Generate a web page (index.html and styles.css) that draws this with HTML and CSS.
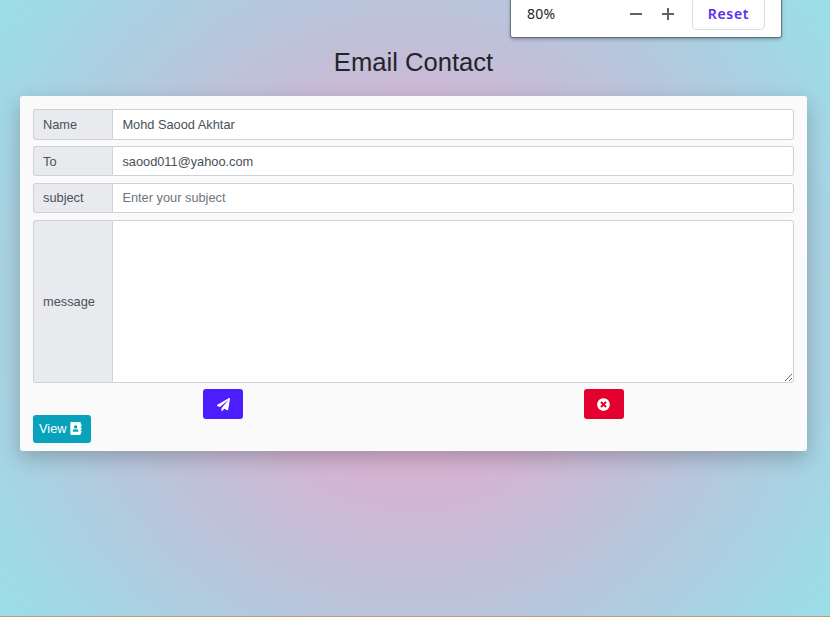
FILE: index.html
```html
<!DOCTYPE html>
<html lang="en">
<head>
<meta charset="utf-8">
<title>Email Contact</title>
<link rel="stylesheet" href="styles.css">
</head>
<body>
<div class="zoom-bubble">
  <span class="zoom-value">80%</span>
  <svg class="zoom-icon" width="14" height="14" viewBox="0 0 14 14"><path d="M1 7h12" stroke="#5f6368" stroke-width="2"/></svg>
  <svg class="zoom-icon" width="14" height="14" viewBox="0 0 14 14"><path d="M1 7h12M7 1v12" stroke="#5f6368" stroke-width="2"/></svg>
  <button class="zoom-reset">Reset</button>
</div>
<main class="container">
  <h2 class="title">Email Contact</h2>
  <form class="card">
    <div class="group"><label class="label" for="name">Name</label><input class="field" id="name" value="Mohd Saood Akhtar"></div>
    <div class="group"><label class="label" for="to">To</label><input class="field" id="to" value="saood011@yahoo.com"></div>
    <div class="group group-subject"><label class="label" for="subject">subject</label><input class="field" id="subject" placeholder="Enter your subject"></div>
    <div class="group group-message"><label class="label" for="message">message</label><textarea class="field" id="message"></textarea></div>
    <div class="actions">
      <button type="button" class="btn btn-send" aria-label="Send"><svg width="13" height="13" viewBox="0 0 512 512"><path fill="#fff" d="M476 3.200L12.500 270.600c-18.100 10.400-15.800 35.600 2.200 43.200L121 358.400l287.300-253.200c5.500-4.900 13.300 2.600 8.600 8.300L176 407v80.500c0 23.600 28.500 32.900 42.500 15.800L282 426l124.600 52.200c14.200 6 30.400-2.900 33-18.200l72-432C515 7.800 493.300-6.800 476 3.200z"/></svg></button>
      <button type="button" class="btn btn-clear" aria-label="Clear"><svg width="13" height="13" viewBox="0 0 512 512"><path fill="#fff" d="M256 8C119 8 8 119 8 256s111 248 248 248 248-111 248-248S393 8 256 8zm121.600 313.100c4.700 4.700 4.700 12.300 0 17L338 377.600c-4.700 4.700-12.300 4.700-17 0L256 312l-65.100 65.600c-4.700 4.700-12.300 4.700-17 0L134.400 338c-4.700-4.700-4.700-12.300 0-17l65.600-65-65.600-65.100c-4.700-4.700-4.700-12.300 0-17l39.600-39.600c4.700-4.700 12.300-4.700 17 0l65 65.700 65.100-65.600c4.700-4.700 12.300-4.700 17 0l39.600 39.600c4.700 4.700 4.700 12.300 0 17L312 256l65.600 65.100z"/></svg></button>
    </div>
    <button type="button" class="btn-view">View <svg width="12" height="13" viewBox="0 0 448 512"><path fill="#fff" d="M436 160c6.600 0 12-5.400 12-12v-40c0-6.600-5.400-12-12-12h-20V48c0-26.500-21.500-48-48-48H48C21.500 0 0 21.500 0 48v416c0 26.500 21.500 48 48 48h320c26.500 0 48-21.500 48-48v-48h20c6.600 0 12-5.400 12-12v-40c0-6.600-5.400-12-12-12h-20v-64h20c6.600 0 12-5.400 12-12v-40c0-6.600-5.400-12-12-12h-20v-64h20zm-228-32c35.300 0 64 28.700 64 64s-28.700 64-64 64-64-28.700-64-64 28.700-64 64-64zm112 236.800c0 10.600-10 19.200-22.400 19.200H118.400C106 384 96 375.400 96 364.800v-19.200c0-31.800 30.100-57.600 67.200-57.600h5c12.300 5.100 25.700 8 39.800 8s27.600-2.900 39.800-8h5c37.100 0 67.200 25.800 67.200 57.600v19.200z"/></svg></button>
  </form>
</main>
</body>
</html>
```
FILE: styles.css
```css
* { box-sizing: border-box; }
body {
  margin: 0;
  height: 617px;
  overflow: hidden;
  border-bottom: 1px solid #b89b72;
  background: radial-gradient(circle at 414px 308px, #eeaeca 0, #d5b4d3 172px, #bdc2da 290px, #a9d1e2 408px, #9fdae6 475px, #99dee8 516px);
  font-family: "Liberation Sans", Arial, sans-serif;
  font-size: 12.8px;
  color: #212529;
}
button, input, textarea { font: inherit; }
.container { padding: 46px 23px 0 20px; }
.title {
  margin: 0 0 18px;
  font-size: 25.6px;
  line-height: 32px;
  font-weight: 400;
  text-align: center;
}
.card {
  height: 355px;
  padding: 13px;
  border-radius: 3px;
  background: #f9faf9;
  box-shadow: 0 7px 20px rgba(0, 0, 0, .22);
}
.group { display: flex; height: 30px; margin-bottom: 7px; }
.group:first-child { height: 31px; margin-bottom: 6px; }
.group-message { height: 163px; margin-bottom: 6px; }
.label {
  display: flex;
  align-items: center;
  width: 79px;
  padding-left: 9px;
  border: 1px solid #ced0da;
  border-right: 0;
  border-radius: 3px 0 0 3px;
  background: #e9eaee;
  color: #495057;
}
.field {
  flex: 1;
  min-width: 0;
  padding: 0 9.4px;
  border: 1px solid #ced0da;
  border-radius: 0 3px 3px 0;
  outline: 0;
  background: #fff;
  color: #495057;
}
.field::placeholder { color: #6c757d; opacity: 1; }
.group-subject .label, .group-subject .field { padding-bottom: 2px; }
textarea.field { resize: vertical; height: 163px; }
.actions { display: grid; grid-template-columns: 1fr 1fr; justify-items: center; height: 26px; }
.btn {
  display: flex;
  align-items: center;
  justify-content: center;
  width: 40px;
  height: 30px;
  padding: 0;
  border: 0;
  border-radius: 3px;
}
.btn-send { background: #4b1dff; }
.btn-clear { background: #e4002f; }
.btn-view {
  display: flex;
  align-items: center;
  gap: 3px;
  width: 58px;
  height: 28px;
  padding: 0 0 2px 6px;
  border: 0;
  border-radius: 3px;
  background: #08a2bd;
  color: #fff;
}
.zoom-bubble {
  position: absolute;
  top: -10px;
  left: 511px;
  display: flex;
  align-items: center;
  width: 270px;
  height: 47px;
  padding: 0 16px;
  border-radius: 0 0 2px 2px;
  background: #fff;
  box-shadow: 0 0 1px 1px rgba(60, 75, 85, .6), 0 2px 4px rgba(0, 0, 0, .3);
  font-family: "Noto Sans", sans-serif;
}
.zoom-value { width: 102px; font-size: 14px; letter-spacing: .2px; }
.zoom-icon { margin-right: 18px; }
.zoom-reset {
  width: 73px;
  height: 32px;
  margin-left: -1px;
  padding: 0;
  flex: none;
  border: 1px solid #dadce0;
  border-radius: 4px;
  background: #fff;
  color: #5a2cf0;
  font-weight: 600;
  font-size: 14px;
  letter-spacing: .7px;
}
```
